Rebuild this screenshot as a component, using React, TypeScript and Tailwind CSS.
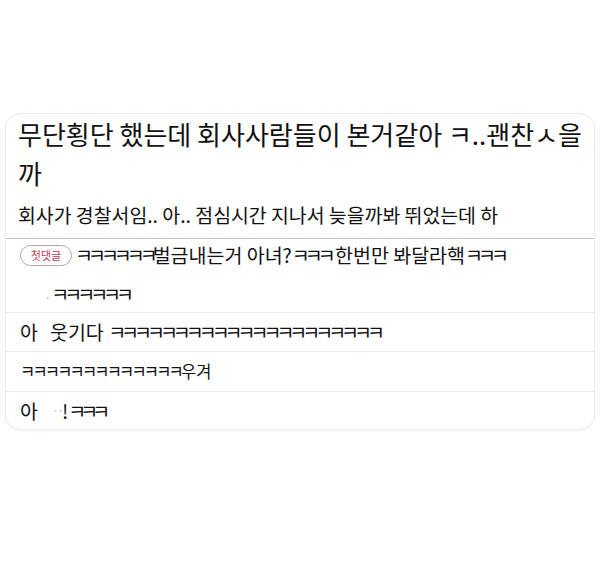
import React from 'react';

const font = { fontFamily: '"Noto Sans CJK KR", "Noto Sans", sans-serif' };

// compatibility jamo ㅋ runs are narrow in the original font
const K = ({ n, tight = 'tracking-[-5px]' }: { n: number; tight?: string }) => (
  <span className={tight}>{'ㅋ'.repeat(n)}</span>
);

const App = () => {
  return (
    <div className="w-[600px] h-[576px] bg-white pt-[113px] px-[5px]" style={font}>
      <div className="rounded-2xl border border-[#ececec] shadow-[0_1px_3px_rgba(0,0,0,0.06)] overflow-hidden">
        {/* Post */}
        <div className="px-[12px] pb-[7px] border-b border-[#c9c9c9]">
          <h1 className="text-[26px] leading-[39px] text-[#111]">
            무단횡단 했는데 회사사람들이 본거같아 ㅋ..괜찬ㅅ을
            <br />까
          </h1>
          <p className="text-[19.4px] leading-[32px] text-[#111] mt-[7px]">
            회사가 경찰서임.. 아.. 점심시간 지나서 늦을까봐 뛰었는데 하
          </p>
        </div>

        {/* Comments */}
        <div className="border-b border-[#ebebeb] px-[14px] pt-[1px]">
          <div className="flex items-center h-[30px] text-[19.5px] text-[#111]">
            <span className="inline-flex items-center justify-center w-[52px] h-[21px] mr-[3px] rounded-full border border-[#b3a3a3] text-[11px] text-[#c0395a] leading-none">
              첫댓글
            </span>
            <span>
              <K n={6} />벌금내는거 아녀?<K n={3} /> 한번만 봐달라핵<K n={3} />
            </span>
          </div>
          <div className="flex items-center h-[36px] mt-[6px] pl-[26px] text-[19.5px] text-[#111]">
            <span className="text-[#bbb] text-[12px] mr-[2px]">.</span>
            <K n={6} />
          </div>
        </div>
        <div className="border-b border-[#ebebeb] px-[14px] h-[39px] flex items-center text-[19.5px] text-[#111]">
          <span>아</span>
          <span className="ml-[12px]">
            웃기다 <K n={21} />
          </span>
        </div>
        <div className="border-b border-[#ebebeb] px-[14px] h-[40px] flex items-center text-[16.5px] text-[#111]">
          <K n={13} tight="tracking-[-2.8px]" />
          <span>우겨</span>
        </div>
        <div className="px-[14px] h-[37px] flex items-center text-[19.5px] text-[#111]">
          <span>아</span>
          <span className="ml-[15px] text-[#ccc] text-[10px]">˙˙</span>
          <span className="-ml-[1px]">!<K n={3} tight="tracking-[-6px]" /></span>
        </div>
      </div>
    </div>
  );
};

export default App;
